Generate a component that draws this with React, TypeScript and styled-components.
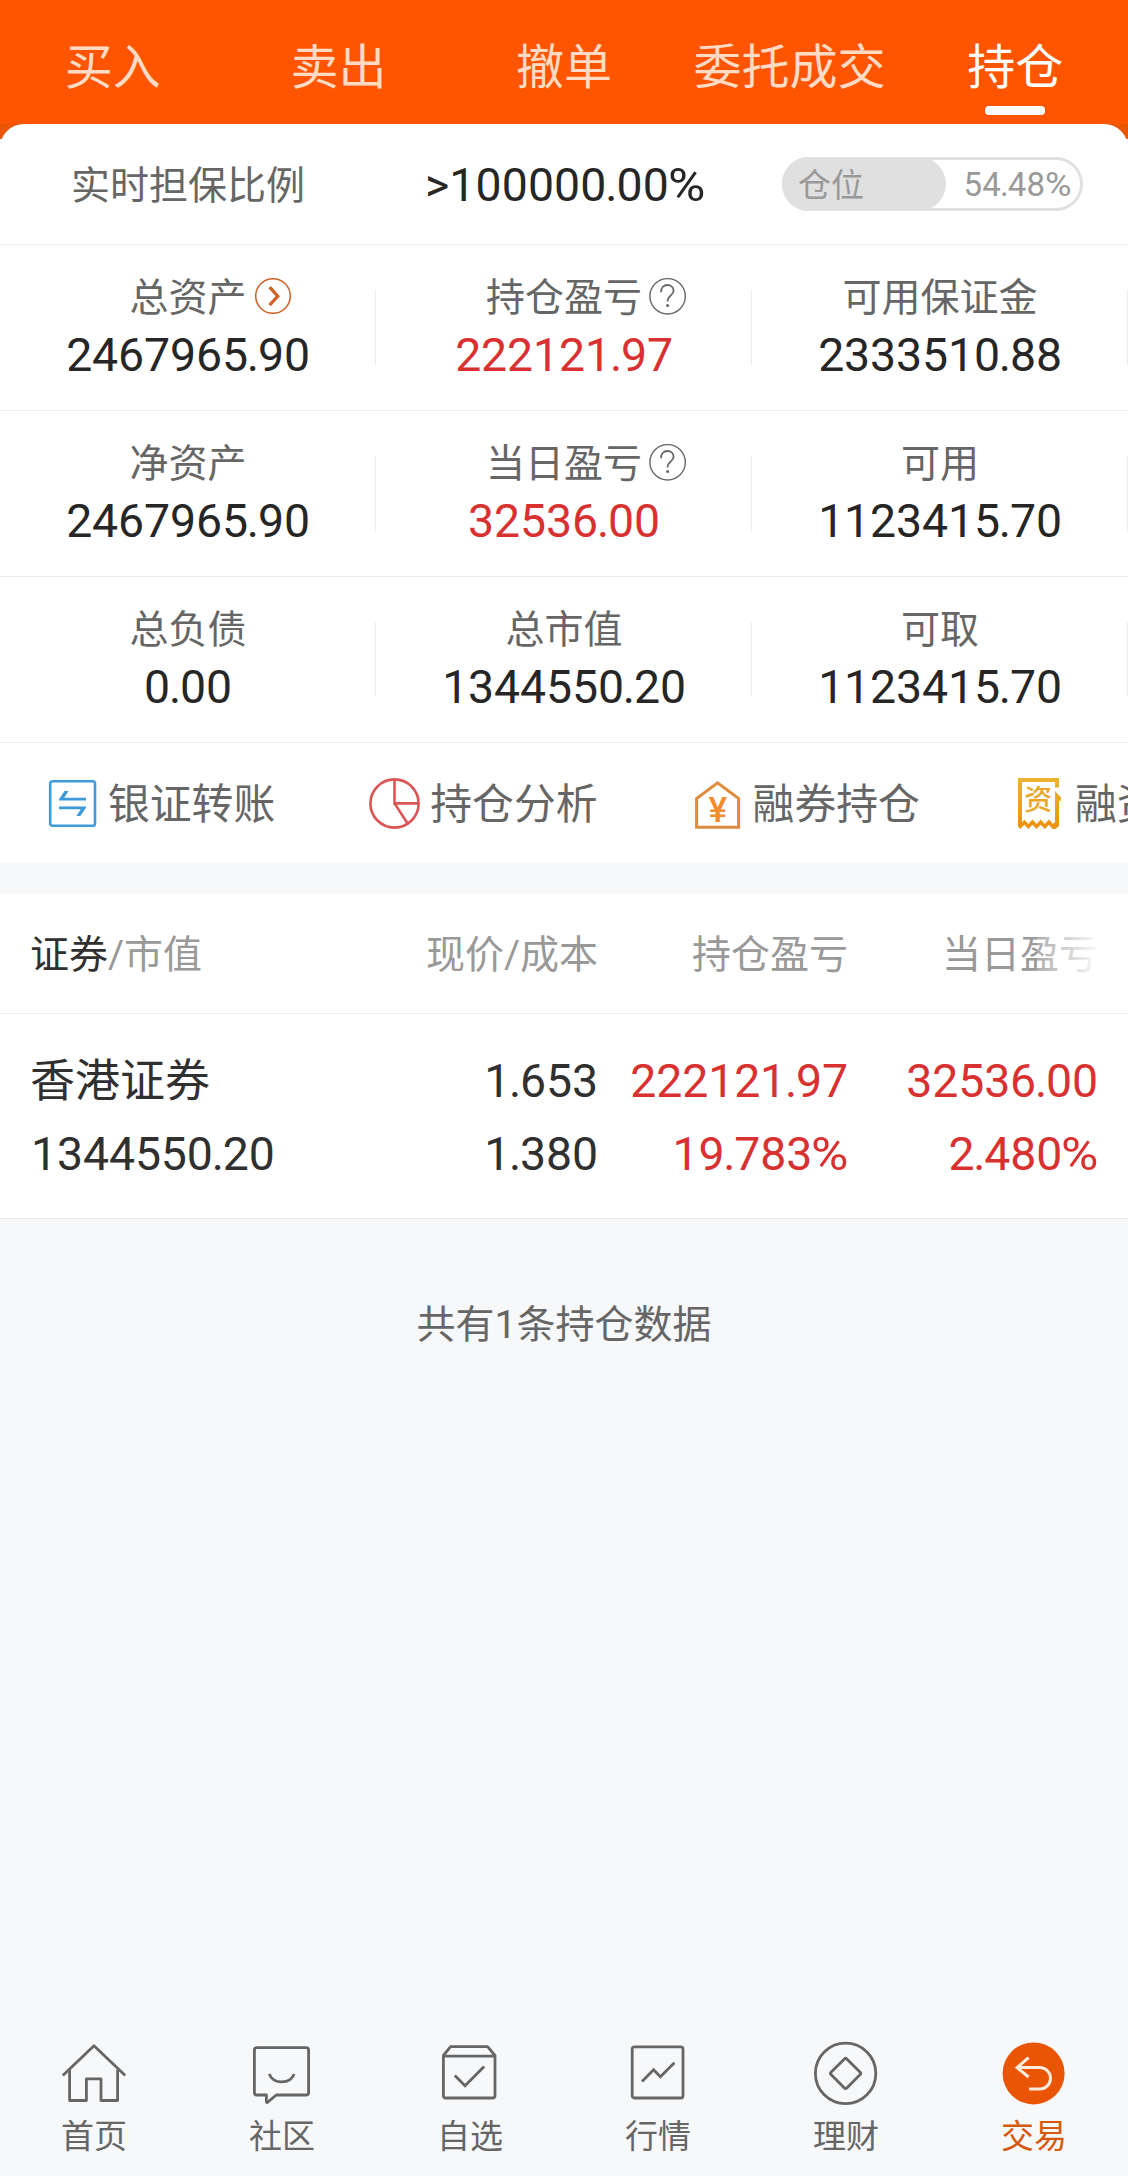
import React from 'react';
import styled, { createGlobalStyle } from 'styled-components';

const GlobalStyle = createGlobalStyle`
  *, *::before, *::after { box-sizing: border-box; }
  html, body { margin: 0; padding: 0; }
  body {
    background: #f7f8fa;
    font-family: Roboto, "Noto Sans CJK SC", sans-serif;
    color: #262626;
    overflow: hidden;
  }
  svg { overflow: visible; }
`;

const Screen = styled.div`
  width: 1128px;
  height: 2176px;
  display: flex;
  flex-direction: column;
  background: #f7f8fa;
  overflow: hidden;
`;

const TopTabs = styled.nav`
  height: 124px;
  flex: none;
  display: grid;
  grid-template-columns: repeat(5, 1fr);
  background: #ff5500;
`;

const TopTab = styled.div<{ $active?: boolean }>`
  position: relative;
  display: flex;
  justify-content: center;
  padding-top: 33px;
  line-height: 70px;
  font-size: 48px;
  white-space: nowrap;
  color: ${(p) => (p.$active ? '#fff' : '#ffdac5')};

  &::after {
    content: '';
    display: ${(p) => (p.$active ? 'block' : 'none')};
    position: absolute;
    left: 50%;
    bottom: 9px;
    width: 60px;
    height: 9px;
    margin-left: -30px;
    border-radius: 4px;
    background: #fff;
  }
`;

const SummaryBackdrop = styled.section`
  flex: none;
  background: linear-gradient(#e85606 15px, #fff 15px);
`;

const Summary = styled.div`
  background: #fff;
  border-radius: 24px 24px 0 0;
`;

const RatioRow = styled.div`
  height: 121px;
  display: flex;
  align-items: center;
  padding: 0 45px 0 71px;
  border-bottom: 1px solid #ececec;
`;

const RatioLabel = styled.div`
  width: 354px;
  padding-bottom: 4px;
  font-size: 39px;
  color: #666;
`;

const RatioValue = styled.div`
  flex: 1;
  padding-top: 2px;
  font-size: 46.4px;
  letter-spacing: 0.1px;
`;

const Dot = styled.span`
  margin: 0 -1.1px;
`;

const Percent = styled.span`
  display: inline-block;
  margin: 0 0.06em 0 -0.02em;
  transform: scaleX(1.1);
  transform-origin: left center;
`;

const Pill = styled.div`
  position: relative;
  width: 301px;
  height: 54px;
  display: flex;
  align-items: center;
  justify-content: space-between;
  padding: 0 9px 0 13px;
  border: 3px solid #e0e0e0;
  border-radius: 27px;
  font-size: 33px;
  color: #999;
`;

const PillFill = styled.div`
  position: absolute;
  left: -3px;
  top: -3px;
  height: 54px;
  border-radius: 27px;
  background: #e0e0e0;
`;

const PillLabel = styled.span`
  position: relative;
  padding-bottom: 2px;
`;

const PillValue = styled.span`
  letter-spacing: 0.2px;
`;

const StatRow = styled.div`
  height: 166px;
  display: grid;
  grid-template-columns: repeat(3, 376px);
  border-bottom: 1px solid #ececec;
`;

const Stat = styled.div`
  display: flex;
  flex-direction: column;
  align-items: center;
  padding-top: 25px;
  background: linear-gradient(#ececec, #ececec) right 45px / 1px 75px no-repeat;
`;

const StatLabel = styled.div`
  position: relative;
  height: 56px;
  line-height: 56px;
  font-size: 39px;
  color: #666;
`;

const StatIcon = styled.span<{ $gap: number }>`
  position: absolute;
  left: 100%;
  top: 7px;
  margin-left: ${(p) => p.$gap}px;
  height: 38px;
  display: flex;
`;

const StatValue = styled.div<{ $up?: boolean }>`
  height: 58px;
  line-height: 58px;
  font-size: 46.4px;
  letter-spacing: -0.1px;
  color: ${(p) => (p.$up ? '#d93030' : '#262626')};
`;

const QuickBar = styled.div`
  height: 120px;
  display: flex;
  align-items: center;
  padding-left: 47px;
  overflow: hidden;
  background: #fff;
`;

const QuickItem = styled.div`
  flex: none;
  width: 322.3px;
  display: flex;
  align-items: center;
  gap: 10px;

  svg { flex: none; }
`;

const QuickLabel = styled.span`
  padding-bottom: 4px;
  font-size: 41.8px;
  color: #666;
  white-space: nowrap;
`;

const Holdings = styled.section`
  flex: none;
  margin-top: 30px;
  background: #fff;
`;

const HoldingsHead = styled.div`
  position: relative;
  height: 121px;
  display: grid;
  grid-template-columns: 318px 250px 250px 250px;
  align-items: center;
  padding: 0 0 4px 30px;
  border-bottom: 1px solid #ececec;
  font-size: 39px;
  color: #999;
`;

const HeadCell = styled.div<{ $first?: boolean }>`
  text-align: ${(p) => (p.$first ? 'left' : 'right')};
  white-space: nowrap;
`;

const Strong = styled.span`
  color: #303030;
`;

const EdgeFade = styled.div`
  position: absolute;
  right: 0;
  top: 0;
  width: 91px;
  height: 120px;
  background: linear-gradient(90deg, rgba(255, 255, 255, 0.2), #fff 72%);
`;

const HoldingRow = styled.div`
  height: 205px;
  display: grid;
  grid-template-columns: 317px 250px 250px 250px;
  padding: 31px 0 0 31px;
  border-bottom: 1px solid #ececec;
  font-size: 46.4px;
  letter-spacing: -0.1px;
  line-height: 73px;
`;

const HoldingCell = styled.div<{ $first?: boolean; $up?: boolean }>`
  display: flex;
  flex-direction: column;
  align-items: ${(p) => (p.$first ? 'flex-start' : 'flex-end')};
  color: ${(p) => (p.$up ? '#d93030' : '#303030')};
  white-space: nowrap;
`;

const Line = styled.div`
  height: 73px;
`;

const StockName = styled.div`
  height: 73px;
  margin-left: -1px;
  font-size: 45px;
  letter-spacing: 0;
`;

const Note = styled.div`
  flex: 1;
  padding-top: 77px;
  text-align: center;
  line-height: 58px;
  font-size: 39px;
  color: #666;
`;

const BottomNav = styled.nav`
  flex: none;
  height: 135px;
  display: grid;
  grid-template-columns: repeat(6, 188px);
`;

const NavItem = styled.div<{ $active?: boolean }>`
  display: flex;
  flex-direction: column;
  align-items: center;
  color: ${(p) => (p.$active ? '#d4580e' : '#666')};
`;

const NavLabel = styled.div`
  margin-top: 8px;
  line-height: 48px;
  font-size: 33px;
`;

const Num = ({ children }: { children: string }) => (
  <>
    {children.split(/([.%])/).map((part, i) => {
      if (part === '.') return <Dot key={i}>.</Dot>;
      if (part === '%') return <Percent key={i}>%</Percent>;
      return part;
    })}
  </>
);

const ArrowBadge = () => (
  <svg width="36" height="38" viewBox="0 0 36 38" fill="none" stroke="#cf6127">
    <circle cx="18" cy="19" r="17.3" strokeWidth="1.5" />
    <path d="M14.6 10.2 L22.8 19.2 L14.6 28.2" strokeWidth="3.2" />
  </svg>
);

const HelpBadge = () => (
  <svg width="38" height="38" viewBox="0 0 38 38" fill="none" stroke="#666">
    <circle cx="18.6" cy="19.3" r="17.7" strokeWidth="1.4" />
    <path
      d="M12 15.2 C12 10.4 14.8 8 18.4 8 C22 8 24.6 10.4 24.6 13.8 C24.6 18.6 18.6 18.4 18.6 24.4"
      strokeWidth="1.8"
    />
    <circle cx="18.6" cy="28.6" r="1.5" fill="#666" stroke="none" />
  </svg>
);

const TransferIcon = () => (
  <svg width="51" height="51" viewBox="0 0 51 51">
    <rect x="3.2" y="3.2" width="44.8" height="44.6" rx="2.4" fill="none" stroke="#3f9ad9" strokeWidth="2.6" />
    <path d="M12 22.4 V21.2 L17.6 13 H21.6 L17.2 19.8 H39 V22.4 Z" fill="#3f9ad9" />
    <path d="M39 28.6 V29.8 L33.4 38 H29.4 L33.8 31.2 H12 V28.6 Z" fill="#3f9ad9" />
  </svg>
);

const PieIcon = () => (
  <svg width="51" height="51" viewBox="0 0 51 51" fill="none" stroke="#db5555" strokeWidth="2.6">
    <circle cx="25.5" cy="25.5" r="24.1" />
    <path d="M25.5 1.5 V25.4 H49.5 M25.5 25.4 L38.8 45.8" />
  </svg>
);

const HouseYuanIcon = () => (
  <svg width="51" height="51" viewBox="0 0 51 51">
    <path d="M4.6 49.2 V20.6 L25.6 4.8 L46.6 20.6 V49.2 Z" fill="none" stroke="#e08c3f" strokeWidth="3" />
    <text x="25.8" y="44.4" textAnchor="middle" fontFamily="Roboto, sans-serif" fontWeight="500" fontSize="35" fill="#f28c2c">
      ¥
    </text>
  </svg>
);

const ReceiptIcon = () => (
  <svg width="51" height="51" viewBox="0 0 51 51">
    <defs>
      <linearGradient id="receipt" x1="0" y1="0" x2="0" y2="1">
        <stop offset="0" stopColor="#e9b52c" />
        <stop offset="1" stopColor="#ee9010" />
      </linearGradient>
    </defs>
    <path
      d="M4 0 H45 V9.5 H41 V4 H8 V44.5 L10.3 41.6 L14.4 46 L18.5 41.6 L22.6 46 L26.7 41.6 L30.8 46 L34.9 41.6 L39 46 L41 44 V13 L47 19.4 V23.5 L45 22 V48 L41.5 51 L38.6 51 L34.9 46.8 L30.8 51 L26.7 46.8 L22.6 51 L18.5 46.8 L14.4 51 L10.3 46.8 L6.4 51 L4 48.6 Z"
      fill="url(#receipt)"
    />
    <text x="24.3" y="32.4" textAnchor="middle" fontFamily='"Noto Sans CJK SC", sans-serif' fontWeight="500" fontSize="28" fill="#e9a726">
      资
    </text>
  </svg>
);

const NavSvg = ({ children }: { children: React.ReactNode }) => (
  <svg width="64" height="64" viewBox="0 0 64 64" fill="none" stroke="#666" strokeWidth="2.8" strokeLinejoin="round">
    {children}
  </svg>
);

const HomeIcon = () => (
  <NavSvg>
    <path d="M0.8 34.4 L32 4.8 L63.2 34.4" />
    <path d="M7.6 29 V59.5 H24.4 V37.8 H39 V59.5 H55.6 V29" />
  </NavSvg>
);

const CommunityIcon = () => (
  <NavSvg>
    <path d="M7 6.6 H56 Q58.6 6.6 58.6 9.2 V51.4 Q58.6 54 56 54 H26.3 L17.4 61.4 Q16.4 61.8 16.4 60.6 V54 H7 Q4.4 54 4.4 51.4 V9.2 Q4.4 6.6 7 6.6 Z" />
    <path d="M19.2 33 C23.5 43.6 40 43.6 44.2 33" />
  </NavSvg>
);

const WatchIcon = () => (
  <NavSvg>
    <path d="M5.4 14.5 L12.6 5.7 H49.6 L57 14.5 V54.4 Q57 57 54.4 57 H8 Q5.4 57 5.4 54.4 Z M5.4 15.2 H57" />
    <path d="M16.8 34.6 L27 44.8 L46.2 25.4" strokeLinejoin="miter" />
  </NavSvg>
);

const MarketIcon = () => (
  <NavSvg>
    <rect x="6.2" y="5.9" width="50.8" height="51.1" rx="2.2" />
    <path d="M16 40.4 L27.6 28.8 L34.4 35.8 L48.4 21.8" strokeLinejoin="miter" />
  </NavSvg>
);

const WealthIcon = () => (
  <NavSvg>
    <circle cx="31.6" cy="32.4" r="30.2" />
    <path d="M30.4 17.9 Q31.6 16.7 32.8 17.9 L46.2 31.2 Q47.4 32.4 46.2 33.6 L32.8 47 Q31.6 48.2 30.4 47 L17 33.6 Q15.8 32.4 17 31.2 Z" />
  </NavSvg>
);

const TradeIcon = () => (
  <svg width="64" height="64" viewBox="0 0 64 64" fill="none">
    <circle cx="31.6" cy="32.4" r="31" fill="#e95504" />
    <path
      d="M26.6 16.6 L15 26.6 L26.6 36 M15 26.6 H37.8 A10.7 10.7 0 0 1 37.8 48 H27"
      stroke="#fdebdc"
      strokeWidth="3"
    />
  </svg>
);

type StatData = { label: string; value: string; up?: boolean; icon?: 'arrow' | 'help' };

const stats: StatData[][] = [
  [
    { label: '总资产', value: '2467965.90', icon: 'arrow' },
    { label: '持仓盈亏', value: '222121.97', up: true, icon: 'help' },
    { label: '可用保证金', value: '2333510.88' },
  ],
  [
    { label: '净资产', value: '2467965.90' },
    { label: '当日盈亏', value: '32536.00', up: true, icon: 'help' },
    { label: '可用', value: '1123415.70' },
  ],
  [
    { label: '总负债', value: '0.00' },
    { label: '总市值', value: '1344550.20' },
    { label: '可取', value: '1123415.70' },
  ],
];

const quickLinks = [
  { label: '银证转账', icon: <TransferIcon /> },
  { label: '持仓分析', icon: <PieIcon /> },
  { label: '融券持仓', icon: <HouseYuanIcon /> },
  { label: '融资', icon: <ReceiptIcon /> },
];

const navItems = [
  { label: '首页', icon: <HomeIcon /> },
  { label: '社区', icon: <CommunityIcon /> },
  { label: '自选', icon: <WatchIcon /> },
  { label: '行情', icon: <MarketIcon /> },
  { label: '理财', icon: <WealthIcon /> },
  { label: '交易', icon: <TradeIcon />, active: true },
];

const position = 54.48;

export default function App() {
  return (
    <>
      <GlobalStyle />
      <Screen>
        <TopTabs>
          {['买入', '卖出', '撤单', '委托成交', '持仓'].map((t) => (
            <TopTab key={t} $active={t === '持仓'}>
              {t}
            </TopTab>
          ))}
        </TopTabs>

        <SummaryBackdrop>
          <Summary>
            <RatioRow>
              <RatioLabel>实时担保比例</RatioLabel>
              <RatioValue>
                <Num>{'>100000.00%'}</Num>
              </RatioValue>
              <Pill>
                <PillFill style={{ width: `${(position / 100) * 301}px` }} />
                <PillLabel>仓位</PillLabel>
                <PillValue>
                  <Num>{`${position}%`}</Num>
                </PillValue>
              </Pill>
            </RatioRow>
            {stats.map((row, i) => (
              <StatRow key={i}>
                {row.map((s) => (
                  <Stat key={s.label}>
                    <StatLabel>
                      {s.label}
                      {s.icon === 'arrow' && (
                        <StatIcon $gap={8.5}>
                          <ArrowBadge />
                        </StatIcon>
                      )}
                      {s.icon === 'help' && (
                        <StatIcon $gap={7}>
                          <HelpBadge />
                        </StatIcon>
                      )}
                    </StatLabel>
                    <StatValue $up={s.up}>
                      <Num>{s.value}</Num>
                    </StatValue>
                  </Stat>
                ))}
              </StatRow>
            ))}
            <QuickBar>
              {quickLinks.map((q) => (
                <QuickItem key={q.label}>
                  {q.icon}
                  <QuickLabel>{q.label}</QuickLabel>
                </QuickItem>
              ))}
            </QuickBar>
          </Summary>
        </SummaryBackdrop>

        <Holdings>
          <HoldingsHead>
            <HeadCell $first>
              <Strong>证券</Strong>/市值
            </HeadCell>
            <HeadCell>现价/成本</HeadCell>
            <HeadCell>持仓盈亏</HeadCell>
            <HeadCell>当日盈亏</HeadCell>
            <EdgeFade />
          </HoldingsHead>
          <HoldingRow>
            <HoldingCell $first>
              <StockName>香港证券</StockName>
              <Line>
                <Num>1344550.20</Num>
              </Line>
            </HoldingCell>
            <HoldingCell>
              <Line>
                <Num>1.653</Num>
              </Line>
              <Line>
                <Num>1.380</Num>
              </Line>
            </HoldingCell>
            <HoldingCell $up>
              <Line>
                <Num>222121.97</Num>
              </Line>
              <Line>
                <Num>19.783%</Num>
              </Line>
            </HoldingCell>
            <HoldingCell $up>
              <Line>
                <Num>32536.00</Num>
              </Line>
              <Line>
                <Num>2.480%</Num>
              </Line>
            </HoldingCell>
          </HoldingRow>
        </Holdings>

        <Note>共有1条持仓数据</Note>

        <BottomNav>
          {navItems.map((n) => (
            <NavItem key={n.label} $active={n.active}>
              {n.icon}
              <NavLabel>{n.label}</NavLabel>
            </NavItem>
          ))}
        </BottomNav>
      </Screen>
    </>
  );
}
